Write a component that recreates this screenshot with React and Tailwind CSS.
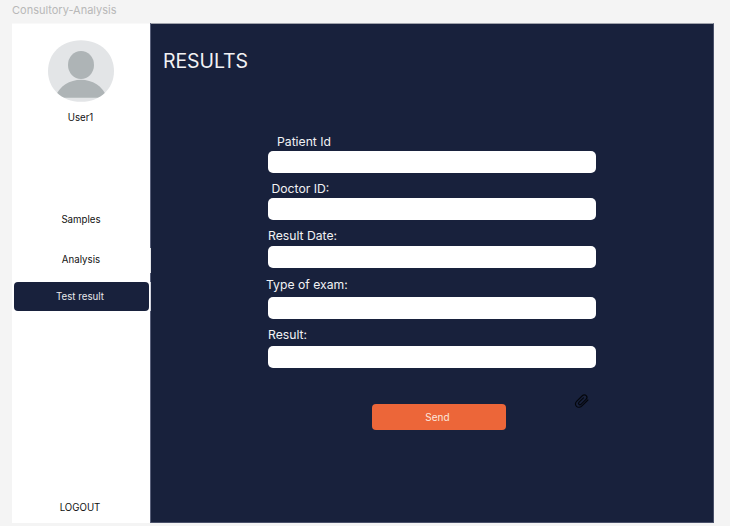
const fields = [
  { label: "Patient Id", labelClass: "h-[18px] pl-[9px] pt-px", gap: "mt-0" },
  { label: "Doctor ID:", labelClass: "h-[18px] pl-[3.5px] pt-px", gap: "mt-[7px]" },
  { label: "Result Date:", labelClass: "h-[18px]", gap: "mt-[8px]" },
  { label: "Type of exam:", labelClass: "h-[20px] -ml-[2px]", gap: "mt-[9px]" },
  { label: "Result:", labelClass: "h-[19px]", gap: "mt-[8px]" },
];

function Avatar() {
  return (
    <svg className="mt-[16px] ml-[35px] h-[63px] w-[68px]" viewBox="0 0 68 63">
      <defs>
        <clipPath id="avatar-clip">
          <path d="M34 .2C54 .2 67 14 67 31S54 61.8 34 61.8 1 48 1 31 14 .2 34 .2Z" />
        </clipPath>
      </defs>
      <path d="M34 .2C54 .2 67 14 67 31S54 61.8 34 61.8 1 48 1 31 14 .2 34 .2Z" fill="#e3e5e7" />
      <g clipPath="url(#avatar-clip)" fill="#aeb4b6">
        <ellipse cx="34" cy="25" rx="13" ry="14" />
        <path d="M8 57.7C12 46 23 39.8 34 39.8S56 46 60 57.7Z" />
      </g>
    </svg>
  );
}

function Paperclip() {
  return (
    <svg className="h-[16px] w-[16px]" viewBox="0 0 16 16" fill="none" stroke="#05070d" strokeWidth="1.2" strokeLinecap="round" strokeLinejoin="round">
      <path d="M13.9 7 8.2 12.7C6.6 14.4 4 14.8 2.5 13.4 1 12 1.1 9.8 2.6 8.3L8.3 2.8C9.4 1.7 11.2 1.6 12.2 2.6 13.2 3.6 13.1 5.2 12 6.3L7.2 11.1C6.5 11.8 5.5 11.9 4.9 11.3 4.3 10.7 4.4 9.8 5.1 9.1L9.5 4.9" />
    </svg>
  );
}

function Sidebar() {
  return (
    <aside className="flex w-[138px] shrink-0 flex-col bg-white text-center text-[9.7px] leading-[14px] text-[#111]">
      <Avatar />
      <div className="mt-[8px] pr-[1px]">User1</div>
      <nav className="mt-[88px] flex flex-col">
        <div>Samples</div>
        <div className="mt-[26px]">Analysis</div>
        <div className="mt-[15px] mr-px ml-[2px] flex h-[29px] items-center justify-center rounded-[4px] bg-[#18213c] pt-px pr-[3px] text-[#e8e9ec]">
          Test result
        </div>
      </nav>
      <div className="mt-auto mb-[8px] pr-[2px]">LOGOUT</div>
    </aside>
  );
}

export default function App() {
  return (
    <div className="flex h-[526px] w-[730px] flex-col overflow-hidden bg-[#f4f4f4] font-['Inter',sans-serif]">
      <div className="h-[23px] shrink-0 pt-[3px] pl-[12px] text-[11px] leading-[15px] text-[#b8b8b8]">Consultory-Analysis</div>
      <div className="ml-[12px] flex h-[500px] w-[702px]">
        <div className="flex border-t border-[#f9f9f9]">
          <Sidebar />
        </div>
        <div className="flex w-px shrink-0 flex-col bg-[#59607a]">
          <div className="mt-[225px] h-[25px] bg-[#e5e6ea]" />
          <div className="mt-[9px] h-[29px] bg-[#d0d2dc]" />
        </div>
        <main className="flex-1 border border-l-0 border-[#495069] border-t-[#a0a3ac] bg-[#18213c] text-[#f2f2f4]">
          <h1 className="pt-[24px] pl-[12px] text-[19.5px] leading-[26px] tracking-[-0.1px]">RESULTS</h1>
          <form className="mt-[59px] ml-[117px] w-[328px]">
            {fields.map((f) => (
              <div key={f.label} className={f.gap}>
                <div className={`text-[12.2px] leading-[16px] whitespace-nowrap ${f.labelClass}`}>{f.label}</div>
                <div className="h-[22px] rounded-[5px] bg-white" />
              </div>
            ))}
            <div className="mt-[25px] flex items-start justify-between pr-[6px] pl-[104px]">
              <button type="button" className="mt-[11px] h-[26px] w-[134px] rounded-[4px] bg-[#ec6639] pr-[3px] text-[10px] text-[#fbe6dd]">
                Send
              </button>
              <Paperclip />
            </div>
          </form>
        </main>
      </div>
    </div>
  );
}
